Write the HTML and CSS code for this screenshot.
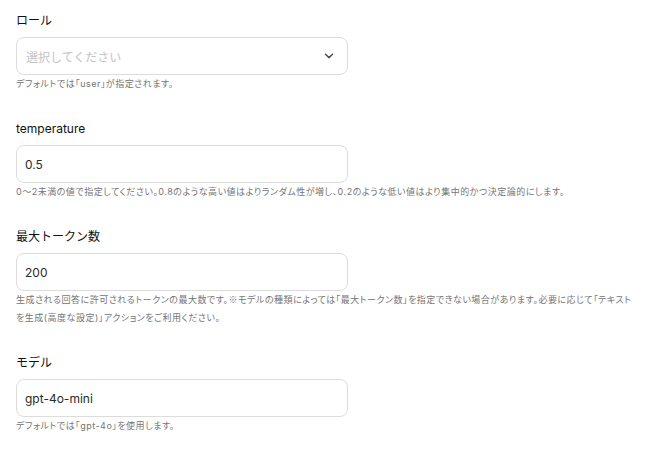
FILE: index.html
```html
<!DOCTYPE html>
<html lang="ja">
<head>
<meta charset="utf-8">
<title>設定</title>
<link rel="stylesheet" href="styles.css">
</head>
<body>
<form class="settings">
  <div class="field">
    <label class="field-label">ロール</label>
    <div class="control select">
      <span class="placeholder">選択してください</span>
      <svg class="chevron" width="10" height="6" viewBox="0 0 10 6" aria-hidden="true">
        <path d="M1.5 1.2l3.5 3.4 3.5-3.4" fill="none" stroke="#505050" stroke-width="1.5" stroke-linecap="round" stroke-linejoin="round"/>
      </svg>
    </div>
    <p class="help">デフォルトでは「user」が指定されます。</p>
  </div>

  <div class="field">
    <label class="field-label">temperature</label>
    <div class="control"><span class="value">0.5</span></div>
    <p class="help">0〜2未満の値で指定してください。0.8のような高い値はよりランダム性が増し、0.2のような低い値はより集中的かつ決定論的にします。</p>
  </div>

  <div class="field">
    <label class="field-label">最大トークン数</label>
    <div class="control"><span class="value">200</span></div>
    <p class="help">生成される回答に許可されるトークンの最大数です。<span class="cjk">※</span>モデルの種類によっては「最大トークン数」を指定できない場合があります。必要に応じて「テキストを生成(高度な設定)」アクションをご利用ください。</p>
  </div>

  <div class="field">
    <label class="field-label">モデル</label>
    <div class="control"><span class="value">gpt-4o-mini</span></div>
    <p class="help">デフォルトでは「gpt-4o」を使用します。</p>
  </div>
</form>
</body>
</html>
```

FILE: styles.css
```css
html, body {
  margin: 0;
  padding: 0;
  background: #ffffff;
}

body {
  font-family: Inter, "Noto Sans CJK JP", sans-serif;
  color: #222222;
}

.settings {
  display: flex;
  flex-direction: column;
  gap: 27px;
  padding: 12px 16px 0 16px;
}

.field {
  display: flex;
  flex-direction: column;
}

.field-label {
  font-size: 12px;
  line-height: 17px;
  font-weight: 400;
  color: #111111;
  margin-bottom: 8px;
}

.control {
  box-sizing: border-box;
  width: 332px;
  height: 38px;
  border: 1px solid #dcdcdc;
  border-radius: 8px;
  padding: 0 8px;
  display: flex;
  align-items: center;
  font-size: 12px;
}

.select {
  justify-content: space-between;
  padding-right: 13px;
  padding-left: 9px;
}

.placeholder {
  color: #c4c4c4;
}

.value {
  color: #2a2a2a;
}

.chevron {
  display: block;
}

.help {
  margin: 0;
  font-size: 9px;
  line-height: 18px;
  color: #757575;
  font-feature-settings: "palt";
  letter-spacing: 0.5px;
}

/* reference mark drawn from the Japanese face */
.cjk {
  font-family: "Noto Sans CJK JP", sans-serif;
}
```
